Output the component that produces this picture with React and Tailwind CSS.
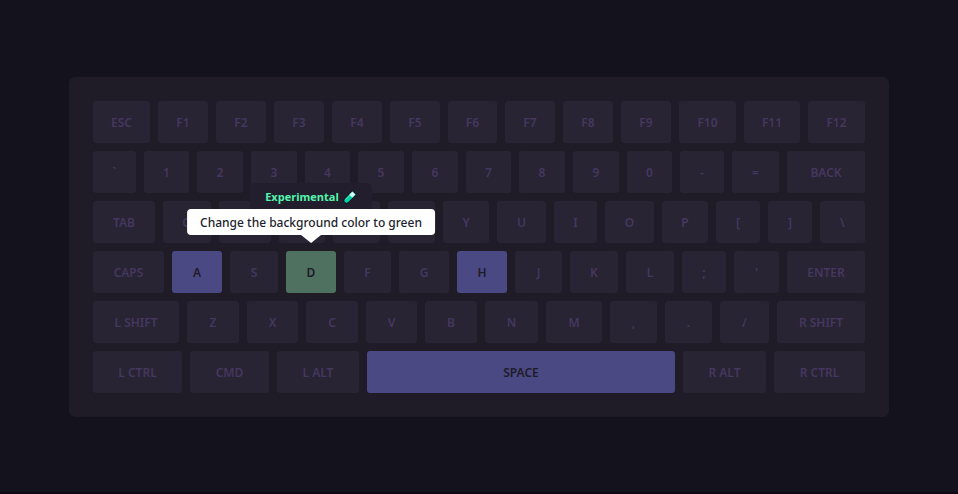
const rows = [
  [['ESC', 57], ['F1', 50], ['F2', 50], ['F3', 50], ['F4', 50], ['F5', 50], ['F6', 49], ['F7', 50], ['F8', 50], ['F9', 50], ['F10', 57], ['F11', 56], ['F12', 57]],
  [['`', 43], ['1', 45], ['2', 46], ['3', 46], ['4', 45], ['5', 46], ['6', 46], ['7', 45], ['8', 46], ['9', 46], ['0', 45], ['-', 44], ['=', 47], ['BACK', 78]],
  [['TAB', 62], ['Q', 48], ['W', 52], ['E', 46], ['R', 47], ['T', 47], ['Y', 46], ['U', 49], ['I', 43], ['O', 49], ['P', 46], ['[', 44], [']', 44], ['\\', 45]],
  [['CAPS', 71], ['A', 50], ['S', 48], ['D', 50], ['F', 47], ['G', 50], ['H', 50], ['J', 47], ['K', 48], ['L', 48], [';', 44], ["'", 45], ['ENTER', 78]],
  [['L SHIFT', 86], ['Z', 52], ['X', 51], ['C', 52], ['V', 51], ['B', 52], ['N', 53], ['M', 56], [',', 47], ['.', 47], ['/', 49], ['R SHIFT', 88]],
  [['L CTRL', 89], ['CMD', 79], ['L ALT', 82], ['SPACE', 308], ['R ALT', 83], ['R CTRL', 91]],
];

const tones = {
  A: 'bg-[#4a4983] text-[#1f1b29]',
  H: 'bg-[#4a4983] text-[#1f1b29]',
  SPACE: 'bg-[#4a4983] text-[#1f1b29]',
  D: 'bg-[#4e7160] text-[#1f1b29]',
};

function TestTube() {
  return (
    <svg width="14" height="14" viewBox="0 0 14 14" aria-hidden="true">
      <path d="M9.3 .9 13.1 4.7 5 12.7Q3.2 14 1.5 12.5 0 10.8 1.3 9Z" fill="#00d0a6" stroke="#0a1018" strokeWidth="1" strokeLinejoin="round" />
      <path d="M9.4 1.6 12.4 4.6 9.2 7.6 6.2 4.8Z" fill="#d9f6f6" />
      <path d="M2.6 9.6 6.8 5.5" stroke="#6df0cf" strokeWidth="0.8" />
    </svg>
  );
}

function Tooltip() {
  return (
    <div
      id="key-tip"
      role="tooltip"
      className="pointer-events-none absolute bottom-full left-1/2 z-10 mb-4 flex -translate-x-1/2 flex-col items-center whitespace-nowrap"
    >
      <div className="flex h-[26px] items-center gap-1 rounded-t-md bg-[#221e2d] px-[15px] pt-0.5 font-['Open_Sans',sans-serif] text-[11px] font-bold text-[#53f5ae]">
        Experimental
        <TestTube />
      </div>
      <div className="relative flex h-[26px] items-center rounded bg-white px-[13px] pt-0.5 text-xs font-medium text-[#221e2d]">
        Change the background color to green
        <svg className="absolute top-full left-1/2 -translate-x-1/2" width="20" height="8" viewBox="0 0 20 8" aria-hidden="true">
          <path d="M0 0H20L10 8Z" fill="#fff" />
        </svg>
      </div>
    </div>
  );
}

function Key({ label, weight }) {
  return (
    <div className="relative flex min-w-0 basis-0" style={{ flexGrow: weight }}>
      <button
        type="button"
        aria-describedby={label === 'D' ? 'key-tip' : undefined}
        className={`h-[42px] w-full rounded-[3px] pt-0.5 text-xs font-semibold ${tones[label] ?? 'bg-[#282433] text-[#45375f]'}`}
      >
        {label}
      </button>
      {label === 'D' && <Tooltip />}
    </div>
  );
}

export default function App() {
  return (
    <main className="flex min-h-screen items-center justify-center border-b-2 border-[#0f0814] bg-[#14121d] pt-0.5 font-['Noto_Sans',sans-serif]">
      <div className="flex w-full max-w-[820px] flex-col gap-2 rounded-md bg-[#1f1b27] p-6">
        {rows.map((row) => (
          <div key={row[0][0]} className="flex gap-2">
            {row.map(([label, weight]) => (
              <Key key={label} label={label} weight={weight} />
            ))}
          </div>
        ))}
      </div>
    </main>
  );
}
